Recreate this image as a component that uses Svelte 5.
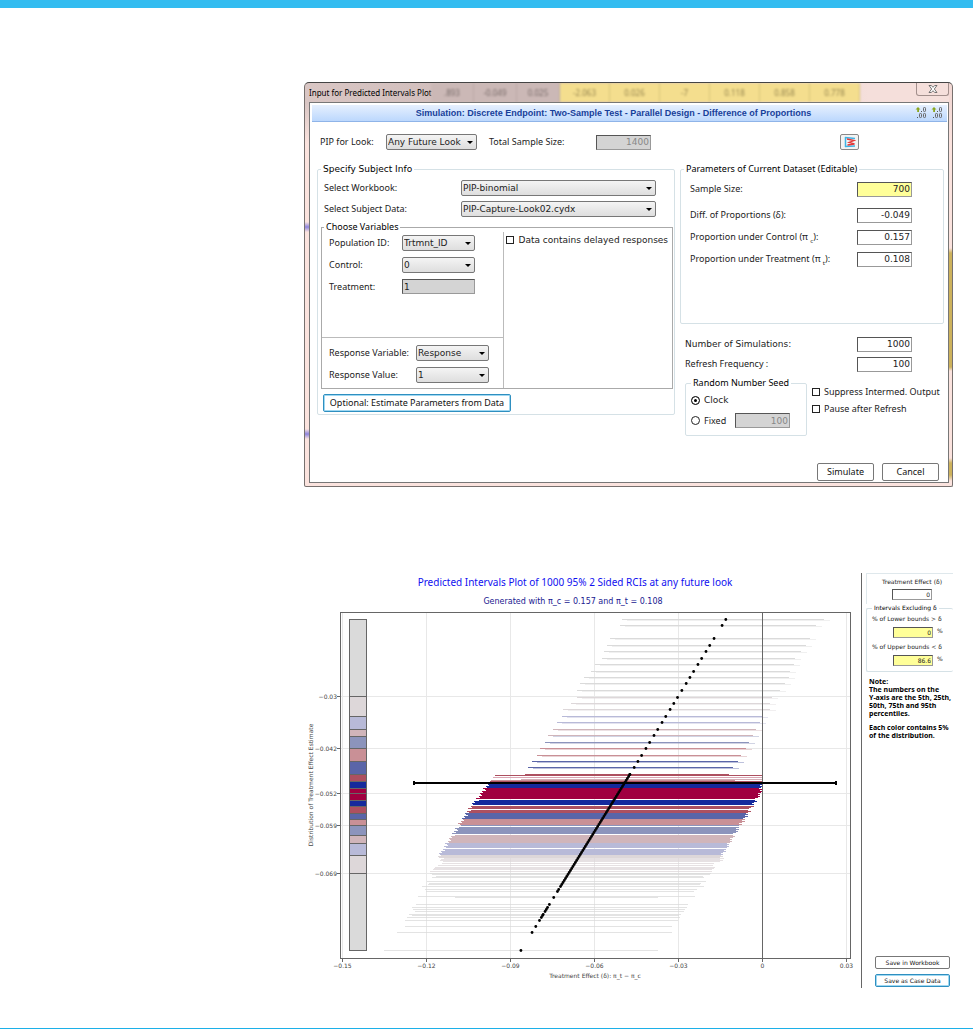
<script lang="ts">
  interface Band {
    from: number;
    to: number;
    color: string;
  }

  let look = $state('Any Future Look');
  let workbook = $state('PIP-binomial');
  let subjectData = $state('PIP-Capture-Look02.cydx');
  let populationId = $state('Trtmnt_ID');
  let control = $state('0');
  let responseVariable = $state('Response');
  let responseValue = $state('1');
  let delayed = $state(false);
  let suppress = $state(false);
  let pause = $state(false);
  let seed = $state('clock');

  const sheetCells = ['.893', '-0.049', '0.025', '-2.063', '0.026', '-7', '0.118', '0.858', '0.778'];

  // plot area, in svg units
  const plot = { left: 36, right: 546, top: 39, bottom: 385 };
  const xScale = (v: number) => 457.5 + v * 2800;
  const dotX = (y: number) => 420.5 - (y - 46.5) * 0.619;

  const xTicks = [-0.15, -0.12, -0.09, -0.06, -0.03, 0, 0.03];
  const yTicks = [
    { label: '−0.03', y: 123.5 },
    { label: '−0.042', y: 175.5 },
    { label: '−0.052', y: 220.5 },
    { label: '−0.059', y: 252.5 },
    { label: '−0.069', y: 300.5 }
  ];

  const edges = [46, 123, 143, 156, 163, 175, 188, 201, 208, 215, 220, 227, 233, 240, 246, 252, 262, 270, 282, 300, 377];
  const palette = ['#dadada', '#ddd7d9', '#b8bad8', '#d0b5ba', '#8c94bc', '#c99096', '#5a65a8', '#ad5060', '#152a9c', '#a00040'];
  const bands: Band[] = edges.slice(1).map((to, i) => ({
    from: edges[i],
    to,
    color: palette[i < 10 ? i : 19 - i]
  }));

  function colorAt(y: number) {
    return bands.find((b) => y < b.to)?.color ?? palette[0];
  }

  // sparse intervals above the median: y, lower bound, upper bound
  const upper = [
    [46, 317, 525], [52, 315, 517], [65, 305, 511], [72, 302, 507], [78, 299, 502], [85, 297, 496],
    [91, 290, 495], [98, 286, 491], [104, 279, 490], [110, 275, 486], [117, 272, 481], [124, 272, 473],
    [130, 266, 471], [136, 258, 471], [143, 257, 463], [149, 252, 461], [156, 248, 457], [162, 243, 454],
    [169, 240, 450], [175, 235, 447], [182, 232, 442], [188, 227, 439], [194, 223, 434], [201, 220, 430]
  ];

  const striped = [
    [202, 190, 457, '#ad5060'], [204, 188, 457, '#dba5b4'], [206, 216, 457, '#d5aeb6'],
    [207, 186, 430, '#c99096'], [208, 185, 457, '#ad5060']
  ] as const;

  const lower = [
    [285, 139, 419], [286, 136, 415], [287, 135, 418], [288, 138, 415], [290, 137, 409], [292, 133, 408],
    [294, 130, 410], [295, 129, 409], [296, 128, 407], [298, 125, 407], [300, 125, 406], [301, 127, 405],
    [303, 131, 398], [304, 127, 399], [308, 122, 401], [310, 124, 396], [311, 123, 395], [313, 117, 399],
    [316, 120, 392], [318, 121, 389], [323, 113, 390], [324, 150, 353], [331, 111, 383], [334, 107, 382],
    [336, 108, 380], [338, 110, 379], [341, 104, 376], [342, 107, 374], [344, 102, 375], [347, 100, 373],
    [353, 100, 367], [359, 92, 367], [377, 79, 353]
  ];

  const gaps = [226, 253, 261, 275, 232, 236];

  // one row per pixel where the intervals pack together
  const dense: number[][] = [];
  for (let y = 211; y < 285; y++) {
    if (gaps.includes(y)) continue;
    const jitter = ((y * 7) % 5) - 2;
    const left = y < 228 ? 183 - (y - 211) * 0.7 : 170 - (y - 228) * 0.66;
    const right = y < 220 ? 456 : 455 - (y - 220) * 0.62;
    dense.push([y, Math.round(left + jitter), Math.round(right + ((y * 3) % 5) - 2)]);
  }

  const dots = [
    ...upper.map((row) => row[0]),
    ...Array.from({ length: 57 }, (_, i) => 201 + i * 2),
    316, 318, 324, 331, 334, 336, 338, 341, 342, 344, 347, 353, 359, 377
  ];
</script>

<div class="page">
  <div class="content">
    <section class="dialog" aria-label="Input for Predicted Intervals Plot">
      <div class="titlebar">
        <span class="title">Input for Predicted Intervals Plot</span>
        <div class="sheet" aria-hidden="true">
          {#each sheetCells as cell, i}
            <span class:yellow={i > 2}>{cell}</span>
          {/each}
        </div>
        <button class="close" aria-label="Close">
          <svg width="10" height="8" viewBox="0 0 10 8">
            <path d="M1 .5h2.300l1.700 1.800L6.700.5H9L6.300 4 9 7.500H6.700L5 5.700 3.300 7.500H1L3.700 4z" fill="#fff" stroke="#555" stroke-width=".8" />
          </svg>
        </button>
      </div>

      <div class="body">
        <header class="banner">
          <h1>Simulation: Discrete Endpoint: Two-Sample Test - Parallel Design - Difference of Proportions</h1>
          <div class="decimals">
            {#each [0, 1] as n}
              <button aria-label={n ? 'Decrease decimals' : 'Increase decimals'}>
                <svg width="12" height="12" viewBox="0 0 12 12">
                  <path d="M3 0L5.500 2.500H4V5H2.200V2.500H.5z" fill="#8aa61c" />
                  <g fill="none" stroke="#666">
                    <rect x="8.500" y=".5" width="2" height="4" rx=".8" />
                    <rect x="4.500" y="6.500" width="2" height="4" rx=".8" />
                    <rect x="8.500" y="6.500" width="2" height="4" rx=".8" />
                  </g>
                  <path d="M6 4h1v1H6zM2 10h1v1H2z" fill="#555" />
                </svg>
              </button>
            {/each}
          </div>
        </header>

        <div class="top-row">
          <label for="look">PIP for Look:</label>
          <span class="select look">
            <select id="look" bind:value={look}><option>Any Future Look</option></select>
          </span>
          <label class="total" for="total">Total Sample Size:</label>
          <input id="total" class="num" value="1400" disabled />
          <button class="plot-button" aria-label="Show plot">
            <svg width="12" height="12" viewBox="0 0 12 12">
              <path d="M1 1.500l10 1M1 10.500l10-.5M1.500 1v10" fill="none" stroke="#3fb2e4" stroke-width="1.500" />
              <path d="M3 3l7 1.500-5 2 5.500 1.500-7 1" fill="none" stroke="#e23b3b" stroke-width="1.300" />
            </svg>
          </button>
        </div>

        <div class="columns">
          <fieldset class="group subject">
            <legend class="wide">Specify Subject Info</legend>
            <div class="pick">
              <label for="workbook">Select Workbook:</label>
              <span class="select">
                <select id="workbook" bind:value={workbook}><option>PIP-binomial</option></select>
              </span>
              <label for="data">Select Subject Data:</label>
              <span class="select">
                <select id="data" bind:value={subjectData}><option>PIP-Capture-Look02.cydx</option></select>
              </span>
            </div>

            <fieldset class="variables">
              <legend>Choose Variables</legend>
              <div class="var-left">
                <div class="var-grid population">
                  <label for="population">Population ID:</label>
                  <span class="select">
                    <select id="population" bind:value={populationId}><option>Trtmnt_ID</option></select>
                  </span>
                  <label for="control">Control:</label>
                  <span class="select">
                    <select id="control" bind:value={control}><option>0</option></select>
                  </span>
                  <label for="treatment">Treatment:</label>
                  <input id="treatment" class="left" value="1" readonly />
                </div>
                <div class="var-grid response">
                  <label for="variable">Response Variable:</label>
                  <span class="select">
                    <select id="variable" bind:value={responseVariable}><option>Response</option></select>
                  </span>
                  <label for="value">Response Value:</label>
                  <span class="select">
                    <select id="value" bind:value={responseValue}><option>1</option></select>
                  </span>
                </div>
              </div>
              <div class="var-right">
                <label class="check wide"><input type="checkbox" bind:checked={delayed} />Data contains delayed responses</label>
              </div>
            </fieldset>

            <button class="btn focus estimate">Optional: Estimate Parameters from Data</button>
          </fieldset>

          <div class="right">
            <fieldset class="group params">
              <legend>Parameters of Current Dataset (Editable)</legend>
              <div class="field first">
                <label for="size">Sample Size:</label>
                <input id="size" class="num yellow" value="700" />
              </div>
              <div class="field">
                <label for="diff">Diff. of Proportions (δ):</label>
                <input id="diff" class="num" value="-0.049" />
              </div>
              <div class="field">
                <label for="pic">Proportion under Control (π <sub>c</sub>):</label>
                <input id="pic" class="num" value="0.157" />
              </div>
              <div class="field">
                <label for="pit">Proportion under Treatment (π <sub>t</sub>):</label>
                <input id="pit" class="num" value="0.108" />
              </div>
            </fieldset>

            <div class="runs">
              <div class="field">
                <label class="wide" for="sims">Number of Simulations:</label>
                <input id="sims" class="num" value="1000" />
              </div>
              <div class="field">
                <label for="freq">Refresh Frequency :</label>
                <input id="freq" class="num" value="100" />
              </div>
            </div>

            <div class="options">
              <fieldset class="group seed">
                <legend>Random Number Seed</legend>
                <label class="check wide"><input type="radio" name="seed" value="clock" bind:group={seed} />Clock</label>
                <div class="fixed">
                  <label class="check"><input type="radio" name="seed" value="fixed" bind:group={seed} />Fixed</label>
                  <input class="num" value="100" aria-label="Fixed seed" disabled />
                </div>
              </fieldset>
              <div class="checks">
                <label class="check"><input type="checkbox" bind:checked={suppress} />Suppress Intermed. Output</label>
                <label class="check"><input type="checkbox" bind:checked={pause} />Pause after Refresh</label>
              </div>
            </div>
          </div>
        </div>

        <footer class="actions">
          <button class="btn">Simulate</button>
          <button class="btn">Cancel</button>
        </footer>
      </div>
    </section>

    <section class="output">
      <svg class="chart" viewBox="0 0 556 415" role="img" aria-label="Predicted Intervals Plot">
        <text class="chart-title" x="270" y="13">Predicted Intervals Plot of 1000 95% 2 Sided RCIs at any future look</text>
        <text class="chart-sub" x="268" y="31">Generated with π_c = 0.157 and π_t = 0.108</text>

        {#each xTicks as tick}
          <line class="grid" x1={xScale(tick)} x2={xScale(tick)} y1={plot.top} y2={plot.bottom} />
          <line class="axis" x1={xScale(tick)} x2={xScale(tick)} y1={plot.bottom} y2={plot.bottom + 4} />
          <text class="tick" x={xScale(tick)} y={plot.bottom + 10}>{String(tick).replace('-', '−')}</text>
        {/each}
        {#each yTicks as tick}
          <line class="grid" x1={plot.left} x2={plot.right} y1={tick.y} y2={tick.y} />
          <line class="axis" x1={plot.left - 4} x2={plot.left} y1={tick.y} y2={tick.y} />
          <text class="tick end" x={plot.left - 4} y={tick.y + 2}>{tick.label}</text>
        {/each}

        {#each upper as [y, x1, x2]}
          <rect x={x1} {y} width={x2 - x1 - 6} height="1" fill={colorAt(y)} />
          <rect x={x1 + 5} y={y + 1} width={x2 - x1 - 5} height="1" fill={colorAt(y + 1)} opacity="0.4" />
        {/each}
        {#each striped as [y, x1, x2, fill]}
          <rect x={x1} {y} width={x2 - x1} height="1" {fill} />
        {/each}
        {#each dense as [y, x1, x2]}
          <rect x={x1} {y} width={x2 - x1} height="1" fill={colorAt(y)} />
        {/each}
        {#each lower as [y, x1, x2]}
          <rect x={x1} {y} width={x2 - x1} height="1" fill={colorAt(y)} opacity="0.75" />
        {/each}

        {#each bands as band}
          <rect x="44.500" y={band.from + 0.5} width="17" height={band.to - band.from} fill={band.color} stroke="#666" />
        {/each}

        <line class="zero" x1={xScale(0)} x2={xScale(0)} y1={plot.top} y2={plot.bottom} />
        {#each dots as y}
          <circle cx={dotX(y)} cy={y + 0.5} r="1.400" />
        {/each}
        <path class="whisker" d="M109 210H531M109 208v4M531 208v4" />
        <rect class="frame" x={plot.left - 0.5} y={plot.top + 0.5} width={plot.right - plot.left} height={plot.bottom - plot.top} />

        <text class="axis-title" x="290" y="405">Treatment Effect (δ): π_t − π_c</text>
        <text class="axis-title" transform="translate(8 212) rotate(-90)">Distribution of Treatment Effect Estimate</text>
      </svg>

      <aside class="side">
        <div class="effect">
          <label for="effect">Treatment Effect (δ)</label>
          <input id="effect" value="0" />
        </div>
        <fieldset class="group excluding">
          <legend>Intervals Excluding δ</legend>
          <label for="lowerPct">% of Lower bounds &gt; δ</label>
          <div class="pct"><input id="lowerPct" class="yellow" value="0" /><span>%</span></div>
          <label for="upperPct">% of Upper bounds &lt; δ</label>
          <div class="pct"><input id="upperPct" class="yellow" value="86.6" /><span>%</span></div>
        </fieldset>
        <p>Note:<br />The numbers on the<br />Y-axis are the 5th, 25th,<br />50th, 75th and 95th<br />percentiles.</p>
        <p>Each color contains 5%<br />of the distribution.</p>
        <div class="save">
          <button class="btn">Save in Workbook</button>
          <button class="btn focus">Save as Case Data</button>
        </div>
      </aside>
    </section>
  </div>
</div>

<style>
  :global(body) {
    background: #fff;
  }

  .page {
    box-sizing: border-box;
    min-height: 100vh;
    border-top: 8px solid #33bcf0;
    border-bottom: 1px solid #1cb0e8;
    font: 9px/12px 'Noto Sans', 'DejaVu Sans', sans-serif;
    color: #222;
  }

  .page :global(*) {
    box-sizing: border-box;
  }

  .content {
    padding: 74px 20px 0 304px;
  }

  button,
  input,
  select {
    font: inherit;
    color: inherit;
    margin: 0;
  }

  fieldset {
    margin: 0;
    padding: 0;
    border: 0;
    min-width: 0;
  }

  legend {
    padding: 0 2px;
    line-height: 10px;
    color: #000;
  }

  .dialog {
    border: 1px solid #77706e;
    border-top-color: #444;
    border-radius: 5px 5px 2px 2px;
    padding: 0 3px 3px 4px;
    background:
      linear-gradient(#f3d9d5 20px, #fbe3de 60px, #fbe3de 165px, #cdb25c 170px, #cdb25c 284px, #fbe3de 288px, #fbe3de 375px, #cdb25c 380px, #cdb25c 392px, #fbe3de 398px) right / 5px 100% no-repeat,
      linear-gradient(#d9c6c4 20px, #fbe3de 60px, #fbe3de 139px, #8d84dc 144px, #fbe3de 149px, #fbe3de 346px, #8d84dc 351px, #fbe3de 356px);
  }

  .titlebar {
    display: flex;
    height: 19px;
    overflow: hidden;
    line-height: 19px;
    font-size: 8px;
    color: #000;
    background: linear-gradient(90deg, #d9c6c4, #cbb8b6 250px, #f5dfdb 560px);
  }

  .title {
    width: 122px;
    white-space: nowrap;
  }

  .sheet {
    flex: 1;
    display: flex;
    filter: blur(1px);
  }

  .sheet span {
    flex: 0 1 43px;
    text-align: center;
    background: #cbb8b6;
    color: #776a68;
    border-right: 1px solid #bba9a7;
  }

  .sheet span.yellow {
    flex-basis: 50px;
    background: #f4de8e;
    color: #968650;
    border-color: #d9c67c;
  }

  .close {
    width: 33px;
    height: 13px;
    padding: 0;
    border: 1px solid #a28f8c;
    border-top: 0;
    border-radius: 0 0 3px 3px;
    background: #f5dfdb;
    line-height: 0;
  }

  .body {
    border: 1px solid #777;
    background: #fff;
    padding: 2px 1px 1px 2px;
  }

  .banner {
    display: flex;
    align-items: center;
    height: 17px;
    padding: 0 4px 0 0;
    border-bottom: 1px solid #8fb4e8;
    background: linear-gradient(#e6f0fe, #bcd8fd);
  }

  h1 {
    flex: 1;
    margin: 0;
    text-align: center;
    font: bold 9px/16px 'Liberation Sans', sans-serif;
    color: #17409a;
  }

  .decimals {
    display: flex;
    gap: 4px;
  }

  .decimals button {
    padding: 0;
    border: 0;
    background: none;
    line-height: 0;
  }

  .top-row {
    display: flex;
    align-items: center;
    height: 38px;
    padding: 2px 88px 0 8px;
  }

  .top-row > label:first-child {
    width: 66px;
  }

  .look {
    width: 91px;
  }

  .total {
    width: 119px;
    padding-left: 12px;
  }

  .plot-button {
    width: 19px;
    height: 16px;
    padding: 1px 0;
    margin-left: auto;
    border: 1px solid #888;
    border-radius: 2px;
    background: #f3f3f3;
    line-height: 0;
  }

  .select {
    position: relative;
    display: block;
  }

  .select::after {
    content: '';
    position: absolute;
    right: 4px;
    top: 7px;
    border: 3px solid transparent;
    border-top-color: #000;
    border-bottom: 0;
    pointer-events: none;
  }

  select {
    appearance: none;
    display: block;
    width: 100%;
    height: 16px;
    padding: 0 1px;
    border: 1px solid #777;
    border-radius: 2px;
    background: linear-gradient(#f4f4f4, #dedede);
    font: 9px/14px 'DejaVu Sans', sans-serif;
  }

  input:not([type='checkbox'], [type='radio']) {
    width: 55px;
    height: 15px;
    padding: 0 1px;
    border: 1px solid #999;
    border-top-color: #555;
    border-left-color: #555;
    border-radius: 0;
    background: #fff;
    font: 9px/13px 'DejaVu Sans', sans-serif;
    text-align: right;
  }

  input.num:disabled {
    background: #d4d4d4;
    color: #888;
  }

  input.yellow:not([type='checkbox']) {
    background: #ffff99;
  }

  .columns {
    display: grid;
    grid-template-columns: minmax(0, 358fr) minmax(0, 264fr);
    gap: 5px;
    padding: 4px 3px 0 5px;
  }

  .group {
    border: 1px solid #d5e1e6;
    border-radius: 2px;
  }

  .wide {
    font-family: 'DejaVu Sans', sans-serif;
  }

  .subject {
    height: 251px;
    padding: 6px 1px 0 3px;
  }

  .pick {
    display: grid;
    grid-template-columns: 137px 1fr;
    row-gap: 5px;
    align-items: center;
    padding: 0 17px 0 3px;
  }

  .variables {
    display: grid;
    grid-template-columns: 183fr 168fr;
    height: 167px;
    margin-top: 5px;
    border: 1px solid #aaa;
  }

  .variables > legend {
    margin-left: 2px;
  }

  .var-left {
    display: flex;
    flex-direction: column;
    justify-content: space-between;
    border-right: 1px solid #bbb;
  }

  .var-grid {
    display: grid;
    align-items: center;
    row-gap: 6px;
    padding: 3px 0 0 7px;
  }

  .population {
    grid-template-columns: 73px 73px;
  }

  .population input.left {
    width: 73px;
    background: #d4d4d4;
    text-align: left;
  }

  .response {
    grid-template-columns: 87px 73px;
    padding: 7px 0 5px 7px;
    border-top: 1px solid #bbb;
  }

  .var-right {
    padding: 2px 0 0 2px;
  }

  .check {
    display: flex;
    align-items: center;
    gap: 4px;
    white-space: nowrap;
  }

  .check input {
    appearance: none;
    flex: none;
    width: 8px;
    height: 8px;
    border: 1px solid #222;
    background: #fff;
  }

  .check input[type='radio'] {
    width: 9px;
    height: 9px;
    border-radius: 50%;
  }

  .check input:checked {
    background: #000;
    box-shadow: inset 0 0 0 2px #fff;
  }

  .btn {
    height: 18px;
    padding: 0;
    border: 1px solid #777;
    border-radius: 2px;
    background: #fff;
    color: #111;
  }

  .btn.focus {
    border: 1px solid #2f8fc0;
    box-shadow: inset 0 0 0 1px #9fd8f2;
  }

  .estimate {
    width: 188px;
    margin: 5px 0 0 2px;
  }

  .params {
    height: 160px;
  }

  .params > legend {
    margin-left: 3px;
  }

  .field {
    display: flex;
    align-items: center;
    justify-content: space-between;
    height: 22px;
    padding: 0 31px 0 9px;
  }

  .params .first {
    height: 30px;
  }

  sub {
    font-size: 6px;
    line-height: 0;
  }

  .runs {
    padding: 10px 1px 0 0;
  }

  .runs .field {
    height: 20px;
    padding-left: 5px;
  }

  .options {
    display: flex;
    gap: 5px;
    padding: 4px 0 0 5px;
  }

  .seed {
    width: 122px;
    height: 58px;
    padding: 6px 0 0 5px;
  }

  .fixed {
    display: flex;
    justify-content: space-between;
    padding: 7px 16px 0 0;
  }

  .checks {
    display: grid;
    align-content: start;
    gap: 5px;
    padding-top: 8px;
  }

  .actions {
    display: flex;
    justify-content: flex-end;
    gap: 8px;
    padding: 27px 8px 0 0;
  }

  .actions .btn {
    width: 57px;
  }

  .output {
    display: flex;
    padding-left: 1px;
    margin-top: 86px;
  }

  .chart {
    flex: 1;
    min-width: 0;
    display: block;
    font-family: 'DejaVu Sans', sans-serif;
  }

  .chart text {
    text-anchor: middle;
    fill: #444;
  }

  .chart .chart-title {
    font: 10px 'Noto Sans', sans-serif;
    fill: #1010f0;
  }

  .chart .chart-sub {
    font: 8px 'DejaVu Sans', sans-serif;
    fill: #202090;
  }

  .chart .tick,
  .chart .axis-title {
    font-size: 6px;
  }

  .chart .end {
    text-anchor: end;
  }

  .grid {
    stroke: #e8e8e8;
  }

  .axis,
  .zero {
    stroke: #666;
  }

  .frame {
    fill: none;
    stroke: #666;
  }

  .whisker {
    fill: none;
    stroke: #000;
    stroke-width: 2;
  }

  .side {
    display: flex;
    flex-direction: column;
    width: 92px;
    padding-left: 4px;
    border-left: 1px solid #666;
    font: 6px/8px 'DejaVu Sans', sans-serif;
  }

  .side input:not([type='checkbox']) {
    width: 40px;
    height: 11px;
    font-size: 6px;
    line-height: 9px;
  }

  .effect {
    display: grid;
    justify-items: center;
    gap: 3px;
    padding: 4px 0 4px 4px;
    border: solid #dfe8ec;
    border-width: 1px 0 0 1px;
  }

  .excluding {
    padding: 3px 0 0 5px;
    border-right: 0;
  }

  .excluding > legend {
    line-height: 8px;
  }

  .excluding label {
    display: block;
  }

  .pct {
    display: flex;
    gap: 4px;
    padding: 4px 0 5px 21px;
  }

  .side p {
    margin: 6px 0 0 3px;
    font: bold 7px/8px 'Noto Sans', sans-serif;
    color: #000;
    white-space: nowrap;
  }

  .save {
    display: grid;
    gap: 5px;
    margin: auto 3px 1px 9px;
  }

  .save .btn {
    height: 13px;
    line-height: 9px;
  }
</style>
